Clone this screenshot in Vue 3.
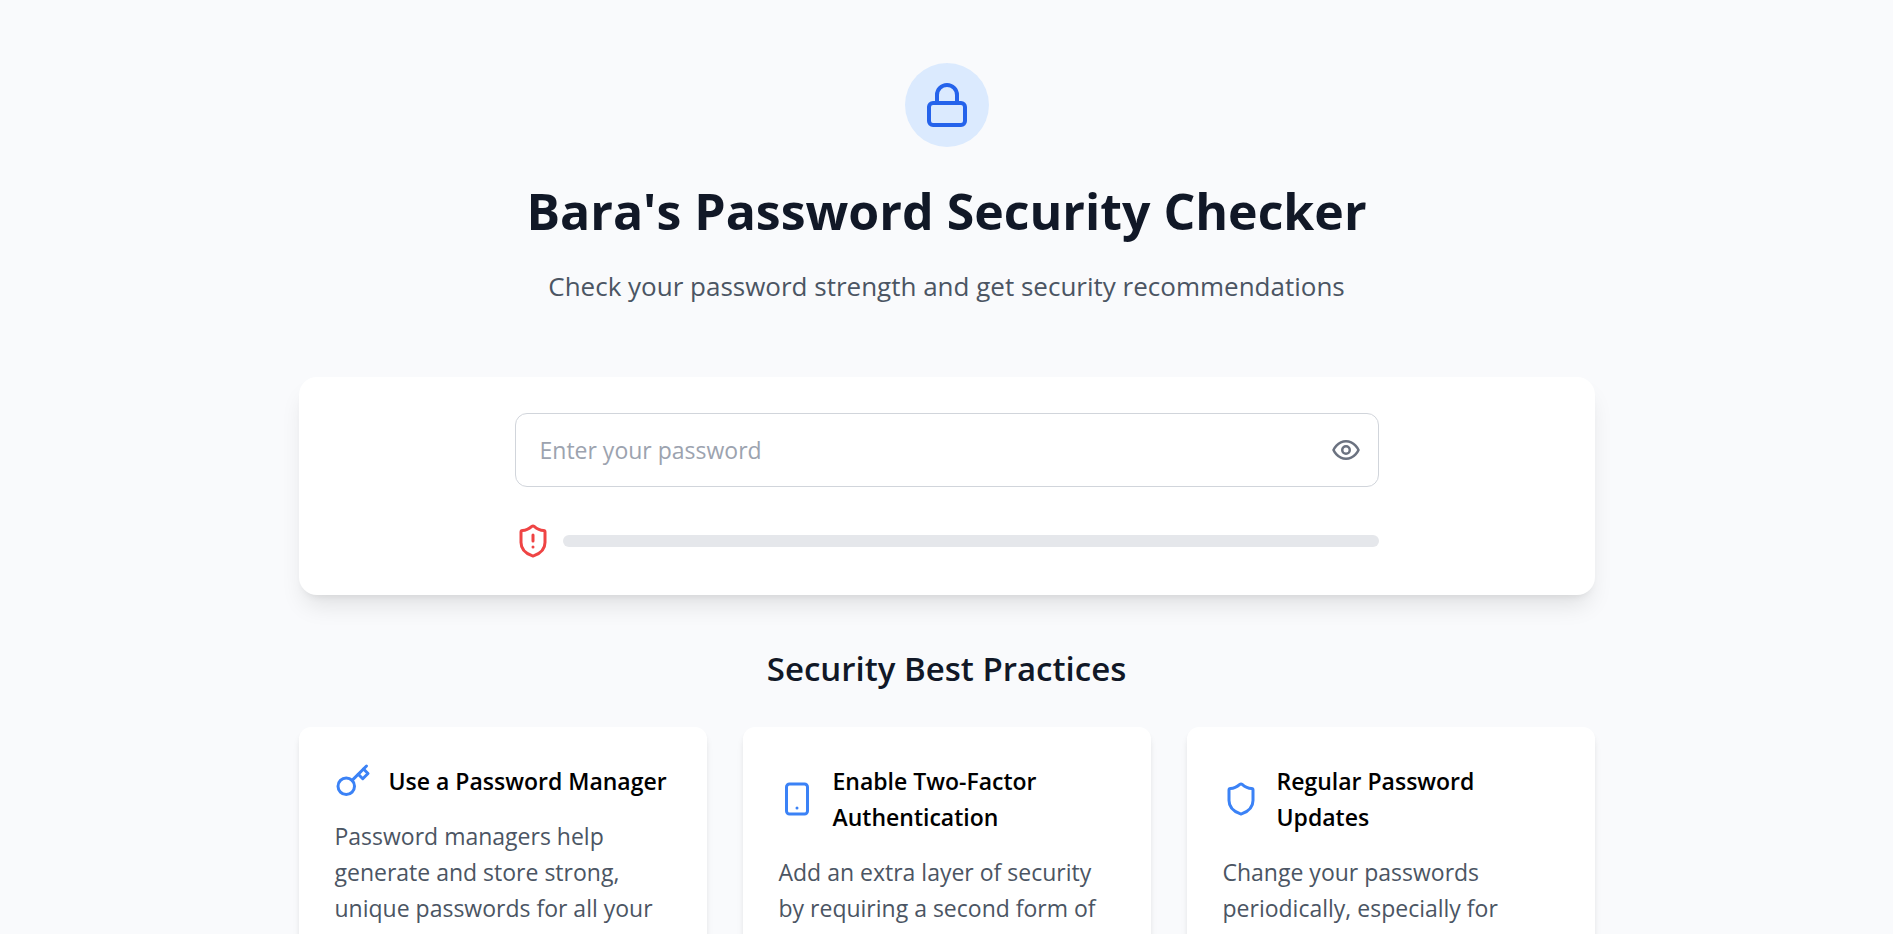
<script setup>
import { ref, computed } from 'vue'

const password = ref('')
const visible = ref(false)

const score = computed(() => {
  const value = password.value
  const rules = [/.{8,}/, /[a-z]/, /[A-Z]/, /[0-9]/, /[^A-Za-z0-9]/]
  return value ? rules.filter((rule) => rule.test(value)).length * 20 : 0
})

const practices = [
  {
    icon: 'key',
    title: 'Use a Password Manager',
    text: 'Password managers help generate and store strong, unique passwords for all your accounts.',
  },
  {
    icon: 'phone',
    title: 'Enable Two-Factor Authentication',
    text: 'Add an extra layer of security by requiring a second form of verification.',
  },
  {
    icon: 'shield',
    title: 'Regular Password Updates',
    text: 'Change your passwords periodically, especially for critical accounts.',
  },
]
</script>

<template>
  <div class="page">
    <main class="container">
      <header class="hero">
        <div class="badge">
          <svg class="icon icon-lock" viewBox="0 0 24 24" aria-hidden="true">
            <rect x="3" y="11" width="18" height="11" rx="2" />
            <path d="M7 11V7a5 5 0 0 1 10 0v4" />
          </svg>
        </div>
        <h1>Bara's Password Security Checker</h1>
        <p class="subtitle">Check your password strength and get security recommendations</p>
      </header>

      <section class="checker">
        <div class="checker-inner">
          <div class="field">
            <input
              v-model="password"
              :type="visible ? 'text' : 'password'"
              aria-label="Password"
              placeholder="Enter your password"
            />
            <button
              type="button"
              class="toggle"
              :aria-label="visible ? 'Hide password' : 'Show password'"
              @click="visible = !visible"
            >
              <svg class="icon icon-eye" viewBox="0 0 24 24" aria-hidden="true">
                <path d="M2 12s3-7 10-7 10 7 10 7-3 7-10 7-10-7-10-7Z" />
                <circle cx="12" cy="12" r="3" />
              </svg>
            </button>
          </div>
          <div class="strength">
            <svg class="icon icon-alert" viewBox="0 0 24 24" aria-hidden="true">
              <path d="M20 13c0 5-3.5 7.5-7.66 8.95a1 1 0 0 1-.67-.01C7.5 20.5 4 18 4 13V6a1 1 0 0 1 1-1c2 0 4.5-1.2 6.24-2.72a1.17 1.17 0 0 1 1.52 0C14.51 3.81 17 5 19 5a1 1 0 0 1 1 1z" />
              <path d="M12 8v4" />
              <path d="M12 16h.01" />
            </svg>
            <div class="track">
              <div class="fill" :style="{ width: score + '%' }"></div>
            </div>
          </div>
        </div>
      </section>

      <section class="practices">
        <h2>Security Best Practices</h2>
        <div class="grid">
          <article v-for="item in practices" :key="item.title" class="card">
            <div class="card-head">
              <svg class="icon icon-card" viewBox="0 0 24 24" aria-hidden="true">
                <template v-if="item.icon === 'key'">
                  <circle cx="7.5" cy="15.5" r="5.5" />
                  <path d="m21 2-9.6 9.6" />
                  <path d="m15.5 7.5 3 3L22 7l-3-3" />
                </template>
                <template v-else-if="item.icon === 'phone'">
                  <rect x="5" y="2" width="14" height="20" rx="2" />
                  <path d="M12 18h.01" />
                </template>
                <path
                  v-else
                  d="M20 13c0 5-3.5 7.5-7.66 8.95a1 1 0 0 1-.67-.01C7.5 20.5 4 18 4 13V6a1 1 0 0 1 1-1c2 0 4.5-1.2 6.24-2.72a1.17 1.17 0 0 1 1.52 0C14.51 3.81 17 5 19 5a1 1 0 0 1 1 1z"
                />
              </svg>
              <h3>{{ item.title }}</h3>
            </div>
            <p>{{ item.text }}</p>
          </article>
        </div>
      </section>
    </main>
  </div>
</template>

<style>
body {
  background: #f9fafc;
  overflow: hidden auto;
  scrollbar-width: none;
}
</style>

<style scoped>
.page {
  box-sizing: border-box;
  min-height: 100vh;
  padding: 63px 24px 48px;
  font-family: "Open Sans", "Noto Sans", sans-serif;
  font-size: 23px;
  line-height: 36px;
  color: #000;
}

.container {
  max-width: 1296px;
  margin: 0 auto;
}

h1,
h2,
h3,
p {
  margin: 0;
}

.icon {
  display: block;
  flex: none;
  fill: none;
  stroke: currentColor;
  stroke-width: 2;
  stroke-linecap: round;
  stroke-linejoin: round;
}

.hero {
  display: flex;
  flex-direction: column;
  align-items: center;
  text-align: center;
  margin-bottom: 70px;
}

.badge {
  padding: 18px;
  border-radius: 50%;
  background: #dbeafe;
  color: #2563eb;
  margin-bottom: 34px;
}

.icon-lock {
  width: 48px;
  height: 48px;
}

h1 {
  font-size: 50px;
  line-height: 60px;
  font-weight: 700;
  color: #111827;
  margin-bottom: 24px;
}

.subtitle {
  font-size: 26px;
  line-height: 42px;
  color: #4b5563;
}

.checker {
  padding: 36px;
  border-radius: 18px;
  background: #fff;
  box-shadow: 0 15px 23px -5px rgba(0, 0, 0, 0.1), 0 6px 9px -6px rgba(0, 0, 0, 0.1);
  margin-bottom: 50px;
}

.checker-inner {
  max-width: 864px;
  margin: 0 auto;
  display: grid;
  gap: 36px;
}

.field {
  position: relative;
}

input {
  box-sizing: border-box;
  display: block;
  width: 100%;
  height: 74px;
  padding: 18px 72px 18px 24px;
  border: 1px solid #d1d5db;
  border-radius: 12px;
  background: #fff;
  font: inherit;
  color: #111827;
}

input::placeholder {
  color: #9ca3af;
  opacity: 1;
}

.toggle {
  position: absolute;
  top: 0;
  bottom: 0;
  right: 18px;
  display: flex;
  align-items: center;
  padding: 0;
  border: 0;
  background: none;
  color: #6b7280;
  cursor: pointer;
}

.icon-eye {
  width: 30px;
  height: 30px;
}

.strength {
  display: flex;
  align-items: center;
  gap: 12px;
}

.icon-alert {
  width: 36px;
  height: 36px;
  color: #ef4444;
}

.track {
  flex: 1;
  height: 12px;
  border-radius: 6px;
  overflow: hidden;
  background: #e5e7eb;
}

.fill {
  height: 100%;
  background: #ef4444;
}

h2 {
  font-size: 33px;
  line-height: 48px;
  font-weight: 600;
  color: #111827;
  text-align: center;
  margin-bottom: 34px;
}

.grid {
  display: grid;
  grid-template-columns: repeat(3, 1fr);
  gap: 36px;
}

.card {
  padding: 36px;
  border-radius: 12px;
  background: #fff;
  box-shadow: 0 6px 9px -2px rgba(0, 0, 0, 0.1), 0 3px 6px -3px rgba(0, 0, 0, 0.1);
}

.card-head {
  display: flex;
  align-items: center;
  gap: 18px;
  margin-bottom: 19px;
}

.icon-card {
  width: 36px;
  height: 36px;
  color: #3b82f6;
}

h3 {
  font-size: 23px;
  line-height: 36px;
  font-weight: 600;
}

.card p {
  color: #4b5563;
}
</style>
